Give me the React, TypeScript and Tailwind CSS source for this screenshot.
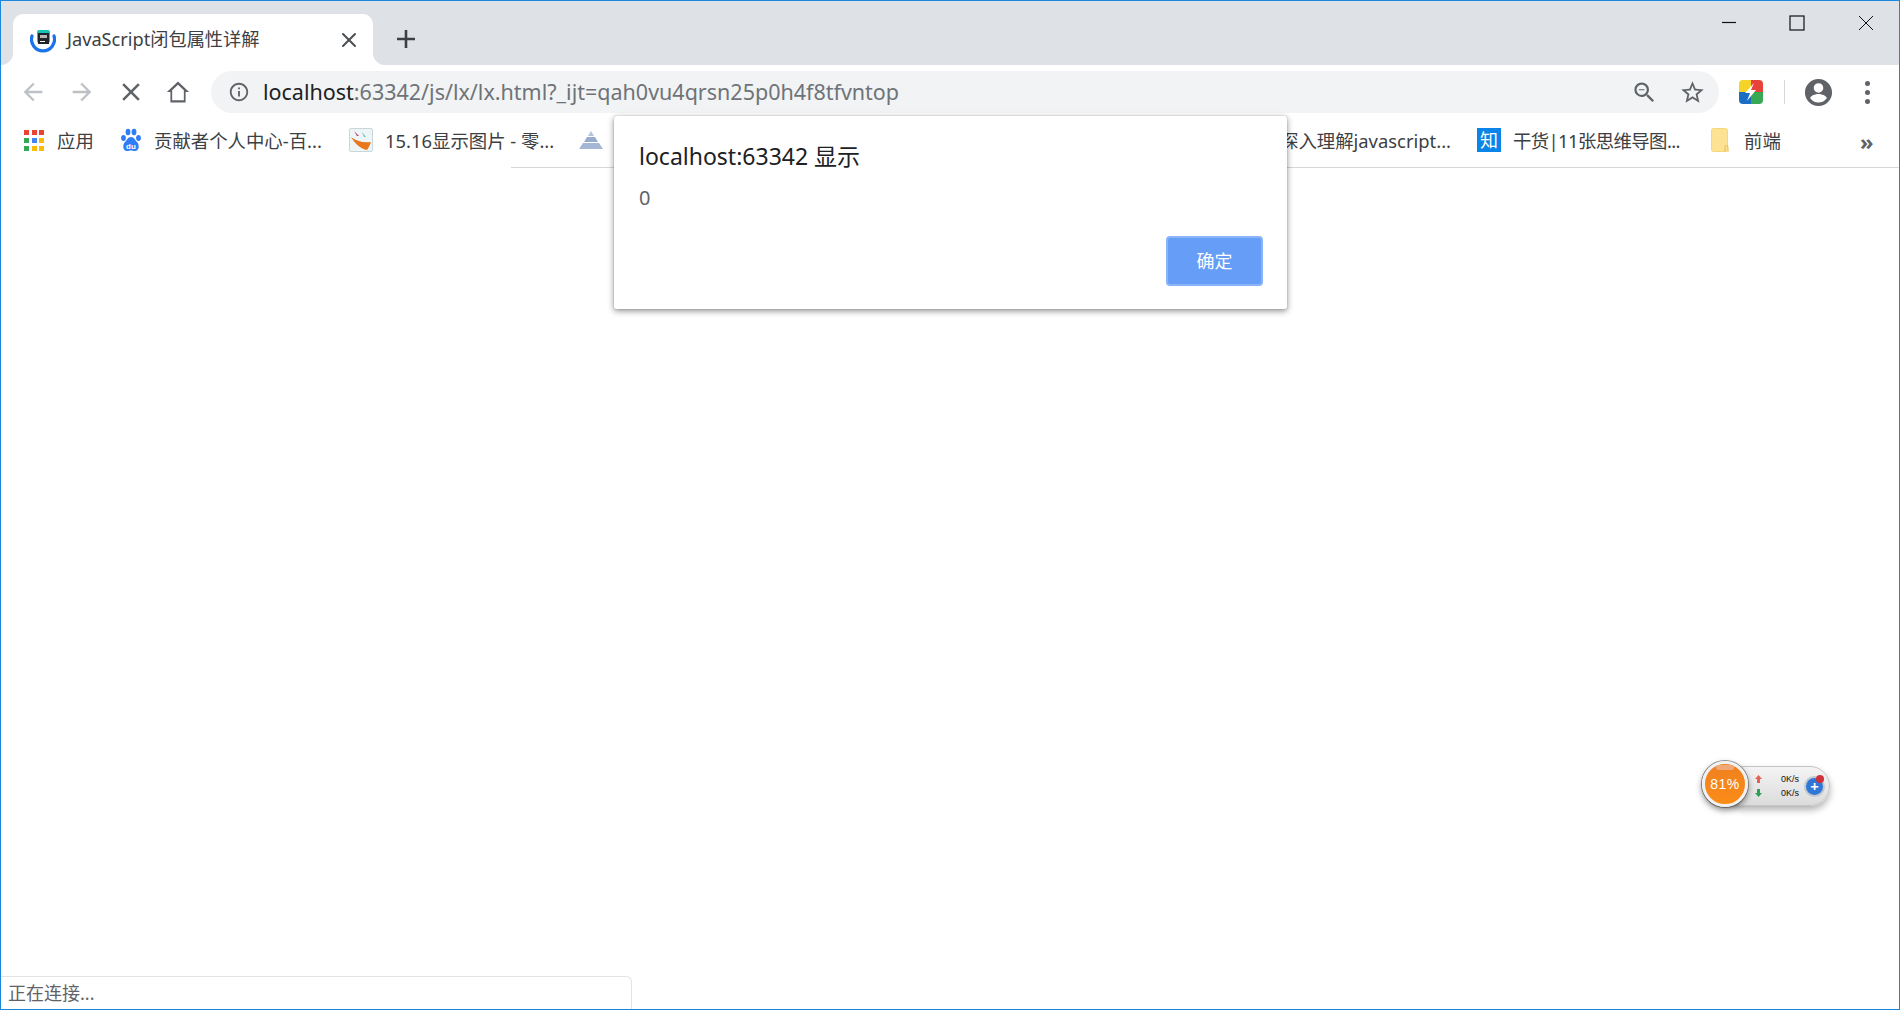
import { X } from 'lucide-react'

const ICON_GREY = '#5f6368'

function Favicon() {
  return (
    <svg width="26" height="26" viewBox="0 0 26 26" className="shrink-0">
      <path d="M2 9a11.5 11.5 0 1 0 22 0" fill="none" stroke="#1a73e8" strokeWidth="3.2" strokeLinecap="round" />
      <rect x="7" y="3" width="13" height="13" rx="2" fill="#17c3b2" />
      <rect x="8" y="6" width="11" height="11" fill="#20242b" />
      <rect x="10" y="8" width="7" height="3" fill="#b8b8b8" />
      <rect x="10" y="14" width="5" height="1" fill="#ffffff" />
    </svg>
  )
}

function NavIcon({ path, size = 28, color = ICON_GREY }: { path: string; size?: number; color?: string }) {
  return (
    <svg width={size} height={size} viewBox="0 0 24 24" fill={color}>
      <path d={path} />
    </svg>
  )
}

function AppsIcon() {
  const colors = ['#ea4335', '#ea4335', '#ea4335', '#34a853', '#4285f4', '#fbbc05', '#34a853', '#fbbc05', '#fbbc05']
  return (
    <div className="grid w-[20px] shrink-0 grid-cols-3 gap-[3px]">
      {colors.map((c, i) => (
        <span key={i} className="h-[5px] w-[5px]" style={{ backgroundColor: c }} />
      ))}
    </div>
  )
}

function BaiduIcon() {
  return (
    <svg width="22" height="24" viewBox="0 0 22 24" className="shrink-0">
      <g fill="#2f7df6">
        <ellipse cx="3.500" cy="10" rx="2.400" ry="3" />
        <ellipse cx="8" cy="4" rx="2.400" ry="3.200" />
        <ellipse cx="14" cy="4" rx="2.400" ry="3.200" />
        <ellipse cx="18.500" cy="10" rx="2.400" ry="3" />
        <path d="M11 9c3 0 4 3 6 5 3 3 2 9-2 9-1.500 0-2.500-.6-4-.6S8.500 23 7 23c-4 0-5-6-2-9 2-2 3-5 6-5z" />
      </g>
      <text x="11" y="21" textAnchor="middle" fontSize="8" fontWeight="700" fill="#ffffff" fontFamily="Liberation Sans, sans-serif">du</text>
    </svg>
  )
}

function SwooshIcon() {
  return (
    <svg width="24" height="24" viewBox="0 0 24 24" className="shrink-0">
      <rect x="0.500" y="0.500" width="23" height="23" rx="1.500" fill="#eef5f7" stroke="#c9d6da" />
      <path d="M2 9c5 4 12 6 20 5-1 3-2 5-4 8-6-1-12-6-16-13z" fill="#e8781e" />
      <path d="M5 3l5 5-2 0z" fill="#b83b7a" />
      <path d="M13 4l4 5-2 0z" fill="#6bbcc0" />
    </svg>
  )
}

function PyramidIcon() {
  return (
    <svg width="24" height="20" viewBox="0 0 24 20" className="shrink-0">
      <path d="M12 0l3 5H9z" fill="#b4c2db" />
      <path d="M8 6h8l3 5H5z" fill="#97abcf" />
      <path d="M4 12h16l4 6H0z" fill="#a3b6d6" />
    </svg>
  )
}

function ExtensionIcon() {
  return (
    <svg width="24" height="24" viewBox="0 0 24 24">
      <defs>
        <clipPath id="ext-clip">
          <rect width="24" height="24" rx="4" />
        </clipPath>
      </defs>
      <g clipPath="url(#ext-clip)">
        <rect width="12" height="12" fill="#f5d327" />
        <rect x="12" width="12" height="12" fill="#e8433a" />
        <rect y="12" width="12" height="12" fill="#1a6fc4" />
        <rect x="12" y="12" width="12" height="12" fill="#37a853" />
        <path d="M15 3L6 13h5l-3 8 9-11h-5z" fill="#ffffff" />
      </g>
    </svg>
  )
}

function FolderIcon() {
  return (
    <svg width="18" height="24" viewBox="0 0 18 24" className="shrink-0">
      <rect x="0.500" y="0.500" width="16" height="23" rx="2" fill="#fde293" stroke="#f6d77e" />
      <path d="M14 24v-5a1.500 1.500 0 0 1 3 0v5" fill="none" stroke="#e9bd4f" />
    </svg>
  )
}

function Bookmark({ width, gap = 11, icon, text, narrow }: { width: number; gap?: number; icon?: React.ReactNode; text?: string; narrow?: boolean }) {
  return (
    <div className="flex shrink-0 items-center" style={{ width, gap }}>
      {icon}
      {text && <span className={narrow ? 'whitespace-nowrap tracking-[-0.600px]' : 'whitespace-nowrap'}>{text}</span>}
    </div>
  )
}

function NetWidget() {
  return (
    <div className="absolute left-[1701px] top-[760px] h-[46px] w-[128px]">
      <div className="absolute left-[22px] top-[5px] flex h-[40px] w-[106px] rounded-full border border-[#c4c4c4] bg-gradient-to-b from-[#f4f4f4] to-[#dcdcdc] shadow-[0_4px_7px_rgba(0,0,0,0.3)]">
        <div className="ml-[30px] flex flex-col justify-center gap-[6px]">
          <svg width="7" height="8" viewBox="0 0 7 8">
            <path d="M3.500 0L7 4H5v4H2V4H0z" fill="#e8604f" />
          </svg>
          <svg width="7" height="8" viewBox="0 0 7 8">
            <path d="M3.500 8L7 4H5V0H2v4H0z" fill="#2f9e57" />
          </svg>
        </div>
        <div className="ml-[19px] flex flex-col justify-center gap-[3px] font-['Liberation_Sans',sans-serif] text-[9px] leading-[11px] text-[#111111]">
          <span>0K/s</span>
          <span>0K/s</span>
        </div>
      </div>
      <div className="absolute left-[104px] top-[17px] flex h-[17px] w-[17px] items-center justify-center rounded-full bg-[#2f77d6] text-[15px] font-bold leading-none text-white ring-2 ring-[#c0c8d2]">+</div>
      <div className="absolute left-[114px] top-[14px] h-[8px] w-[8px] rounded-full bg-[#d0313a]" />
      <div className="absolute left-0 top-0 flex h-[46px] w-[46px] items-center justify-center rounded-full border-[3px] border-[#f1f1f1] bg-gradient-to-b from-[#f0801e] to-[#fb8c17] font-['Liberation_Sans',sans-serif] text-[14px] tracking-[0.5px] text-white shadow-[0_3px_6px_rgba(0,0,0,0.5),0_0_0_1px_#9a9a9a]">
        81%
        <span className="absolute left-[11px] top-[1px] h-[5px] w-[18px] rounded-full bg-[#f0a878]" />
      </div>
    </div>
  )
}

export default function App() {
  return (
    <div className="relative flex h-[1010px] w-full flex-col overflow-hidden border border-[#1a86dc] bg-white font-['Noto_Sans','Noto_Sans_CJK_SC',sans-serif] text-[18.400px] text-[#3c4043]">
      {/* tab strip */}
      <div className="flex h-[64px] shrink-0 items-end bg-[#dee1e6] pl-[12px]">
        <div className="relative flex h-[51px] w-[360px] items-center rounded-t-[10px] bg-white pl-[17px]">
          <span className="absolute bottom-0 left-[-12px] h-[12px] w-[12px] bg-white">
            <span className="block h-full w-full rounded-br-[12px] bg-[#dee1e6]" />
          </span>
          <span className="absolute bottom-0 right-[-12px] h-[12px] w-[12px] bg-white">
            <span className="block h-full w-full rounded-bl-[12px] bg-[#dee1e6]" />
          </span>
          <Favicon />
          <span className="ml-[11px] w-[270px] whitespace-nowrap text-[18.200px]">JavaScript闭包属性详解</span>
          <X size={24} strokeWidth={2} color="#4a4d51" />
        </div>
        <svg width="20" height="20" viewBox="0 0 20 20" className="mb-[16px] ml-[23px]">
          <path d="M10 1v18M1 10h18" stroke="#3c4043" strokeWidth="2.6" />
        </svg>
        <div className="ml-auto flex h-full items-start">
          <svg width="16" height="16" viewBox="0 0 16 16" className="mr-[52px] mt-[14px]">
            <path d="M1 7.500h14" stroke="#111111" strokeWidth="1.200" />
          </svg>
          <svg width="16" height="16" viewBox="0 0 16 16" className="mr-[53px] mt-[14px]">
            <rect x="1" y="1" width="14" height="14" fill="none" stroke="#111111" strokeWidth="1.200" />
          </svg>
          <svg width="16" height="16" viewBox="0 0 16 16" className="mr-[25px] mt-[14px]">
            <path d="M1 1l14 14M15 1L1 15" stroke="#111111" strokeWidth="1" />
          </svg>
        </div>
      </div>

      {/* toolbar */}
      <div className="flex h-[54px] shrink-0 items-center">
        <div className="flex w-[210px] items-center pl-[18px]">
          <div className="w-[49px]">
            <NavIcon color="#bdc1c6" path="M20 11H7.830l5.590-5.590L12 4l-8 8 8 8 1.410-1.410L7.830 13H20v-2z" />
          </div>
          <div className="w-[48px]">
            <NavIcon color="#bdc1c6" path="M4 13h12.170l-5.590 5.590L12 20l8-8-8-8-1.410 1.410L16.170 11H4v2z" />
          </div>
          <div className="w-[48px]">
            <NavIcon size={30} path="M19 6.410L17.590 5 12 10.590 6.410 5 5 6.410 10.590 12 5 17.590 6.410 19 12 13.410 17.590 19 19 17.590 13.410 12z" />
          </div>
          <NavIcon path="M12 3L2.500 12H5.500v9h13v-9h3L12 3zm0 2.700l5 4.700V19H7v-8.600l5-4.700z" />
        </div>
        <div className="flex h-[42px] w-[1508px] shrink-0 items-center rounded-full bg-[#f1f3f4] pl-[17px] pr-[13px] text-[21.500px]">
          <svg width="22" height="22" viewBox="0 0 24 24" fill={ICON_GREY} className="shrink-0">
            <path d="M11 7h2v2h-2zm0 4h2v6h-2zm1-9C6.480 2 2 6.480 2 12s4.480 10 10 10 10-4.480 10-10S17.520 2 12 2zm0 18c-4.410 0-8-3.590-8-8s3.590-8 8-8 8 3.590 8 8-3.590 8-8 8z" />
          </svg>
          <span className="ml-[13px] whitespace-nowrap text-[#202124]">
            localhost<span className="text-[#6f7378]">:63342/js/lx/lx.html?_ijt=qah0vu4qrsn25p0h4f8tfvntop</span>
          </span>
          <div className="ml-auto flex items-center gap-[21px]">
            <svg width="27" height="27" viewBox="0 0 24 24" fill={ICON_GREY}>
              <path d="M15.500 14h-.790l-.280-.270A6.470 6.470 0 0 0 16 9.500 6.500 6.500 0 1 0 9.500 16c1.610 0 3.090-.590 4.230-1.570l.270.280v.790l5 4.990L20.490 19l-4.990-5zm-6 0C7.010 14 5 11.990 5 9.500S7.010 5 9.500 5 14 7.010 14 9.500 11.990 14 9.500 14zM7 9h5v1H7z" />
            </svg>
            <svg width="27" height="27" viewBox="0 0 24 24" fill={ICON_GREY}>
              <path d="M22 9.240l-7.190-.620L12 2 9.190 8.630 2 9.240l5.460 4.730L5.820 21 12 17.270 18.180 21l-1.630-7.030L22 9.240zM12 15.400l-3.760 2.270 1-4.280-3.320-2.880 4.380-.380L12 6.100l1.710 4.040 4.380.380-3.320 2.880 1 4.280L12 15.400z" />
            </svg>
          </div>
        </div>
        <div className="ml-[20px]">
          <ExtensionIcon />
        </div>
        <div className="ml-[21px] h-[24px] w-px bg-[#d4d6d9]" />
        <svg width="31" height="31" viewBox="0 0 24 24" fill={ICON_GREY} className="ml-[18px]">
          <path d="M12 1.500C6.200 1.500 1.500 6.200 1.500 12S6.200 22.500 12 22.500 22.500 17.800 22.500 12 17.800 1.500 12 1.500zm0 3.300a3.700 3.700 0 1 1 0 7.400 3.700 3.700 0 0 1 0-7.400zm0 15a7.800 7.800 0 0 1-6.400-3.300c.030-2.100 4.300-3.300 6.400-3.300s6.370 1.200 6.400 3.300a7.800 7.800 0 0 1-6.400 3.300z" />
        </svg>
        <div className="ml-[31px] flex flex-col gap-[4px]">
          <span className="h-[5px] w-[5px] rounded-full bg-[#5f6368]" />
          <span className="h-[5px] w-[5px] rounded-full bg-[#5f6368]" />
          <span className="h-[5px] w-[5px] rounded-full bg-[#5f6368]" />
        </div>
      </div>

      {/* bookmarks */}
      <div className="flex h-[48px] shrink-0 items-center pb-[5px] pl-[23px] text-[#3c4043]">
        <Bookmark width={96} gap={13} icon={<AppsIcon />} text="应用" />
        <Bookmark width={229} gap={12} icon={<BaiduIcon />} text="贡献者个人中心-百..." />
        <Bookmark width={230} gap={12} icon={<SwooshIcon />} text="15.16显示图片 - 零..." />
        <Bookmark width={701} icon={<PyramidIcon />} />
        <Bookmark width={197} text="探入理解javascript..." />
        <Bookmark
          width={234}
          gap={12}
          narrow
          icon={
            <span className="flex h-[24px] w-[24px] shrink-0 items-center justify-center bg-[#0a84e8] text-[18px] leading-none text-white">知</span>
          }
          text="干货|11张思维导图..."
        />
        <Bookmark width={149} gap={15} icon={<FolderIcon />} text="前端" />
        <span className="text-[22px] font-bold leading-none text-[#5f6368]">»</span>
      </div>
      <div className="ml-[510px] h-px shrink-0 bg-[#d5d7da]" />

      {/* page */}
      <div className="flex-1 bg-white" />

      {/* alert dialog */}
      <div className="absolute left-[613px] top-[115px] flex h-[193px] w-[673px] flex-col rounded-[2px] bg-white pl-[25px] pr-[24px] pt-[25px] shadow-[0_2px_6px_rgba(0,0,0,0.45),0_0_1px_rgba(0,0,0,0.4)]">
        <div className="text-[23px] leading-[30px] text-[#202124]">localhost:63342 显示</div>
        <div className="mt-[14px] text-[20px] leading-[26px] text-[#5f6368]">0</div>
        <div className="mb-[23px] mt-auto flex justify-end">
          <button className="flex h-[50px] w-[97px] items-center justify-center rounded-[4px] border-2 border-[#8ab4f8] bg-[#669df6] text-[18px] text-white">确定</button>
        </div>
      </div>

      <NetWidget />

      {/* status bubble */}
      <div className="absolute bottom-[-1px] left-[-1px] flex h-[34px] w-[632px] items-center rounded-tr-[6px] border-r border-t border-[#e2e3e5] bg-white pl-[8px] text-[18px] text-[#5f6368]">
        正在连接...
      </div>
    </div>
  )
}
